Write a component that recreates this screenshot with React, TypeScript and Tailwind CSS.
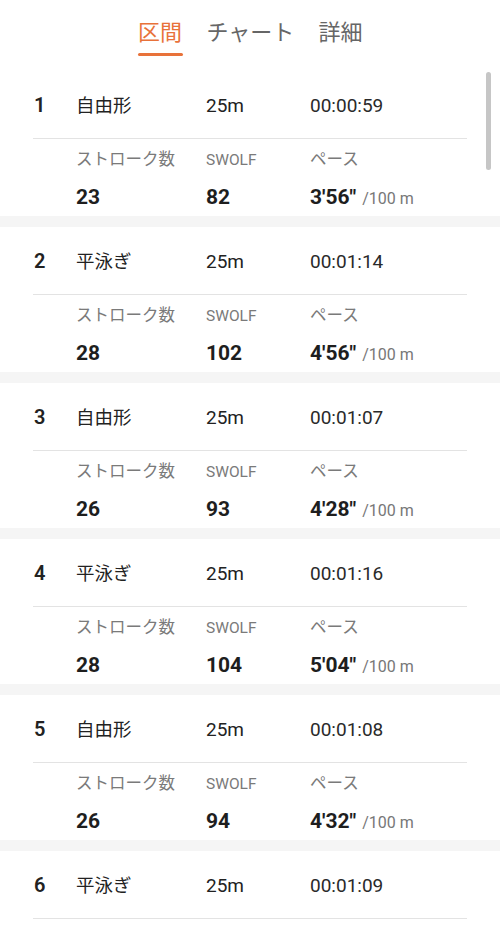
const LAPS = [
  { no: 1, stroke: "自由形", dist: "25m", time: "00:00:59", count: 23, swolf: 82, pace: "3'56\"" },
  { no: 2, stroke: "平泳ぎ", dist: "25m", time: "00:01:14", count: 28, swolf: 102, pace: "4'56\"" },
  { no: 3, stroke: "自由形", dist: "25m", time: "00:01:07", count: 26, swolf: 93, pace: "4'28\"" },
  { no: 4, stroke: "平泳ぎ", dist: "25m", time: "00:01:16", count: 28, swolf: 104, pace: "5'04\"" },
  { no: 5, stroke: "自由形", dist: "25m", time: "00:01:08", count: 26, swolf: 94, pace: "4'32\"" },
  { no: 6, stroke: "平泳ぎ", dist: "25m", time: "00:01:09", count: 27, swolf: 96, pace: "4'36\"" },
];

const TABS = ["区間", "チャート", "詳細"];

function LapCard({ lap }: { lap: (typeof LAPS)[number] }) {
  return (
    <div className="h-[145px] bg-white shrink-0">
      <div className="mx-[33px]">
        {/* Main row */}
        <div className="h-[67px] flex items-baseline pt-[21px] text-[#222] leading-[26px]">
          <span className="w-[43px] pl-px text-[20px] font-semibold">{lap.no}</span>
          <span className="w-[130px] text-[18.5px]">{lap.stroke}</span>
          <span className="w-[104px] text-[19px]">{lap.dist}</span>
          <span className="text-[19px] text-[#2a2a2a]">{lap.time}</span>
        </div>
        <div className="h-px bg-[#e3e3e3]" />

        {/* Stats */}
        <div className="pl-[43px] pt-[10px]">
          <div className="flex text-[16.5px] leading-[22px] text-[#7a7a7a]">
            <span className="w-[130px]">ストローク数</span>
            <span className="w-[104px] text-[15.5px]">SWOLF</span>
            <span>ペース</span>
          </div>
          <div className="flex items-baseline mt-[13px] text-[21px] leading-[26px] font-bold text-[#1e1e1e]">
            <span className="w-[130px]">{lap.count}</span>
            <span className="w-[104px]">{lap.swolf}</span>
            <span>
              {lap.pace}
              <span className="ml-[6px] text-[16px] font-normal text-[#777]">/100 m</span>
            </span>
          </div>
        </div>
      </div>
    </div>
  );
}

export default function App() {
  return (
    <div
      className="relative w-[500px] h-[930px] overflow-hidden bg-[#f5f5f5]"
      style={{ fontFamily: "Roboto, 'Noto Sans CJK JP', sans-serif" }}
    >
      {/* Tabs */}
      <div className="h-[71px] bg-white flex justify-center gap-[24px] pt-[19px]">
        {TABS.map((tab, i) => (
          <div key={tab} className="flex flex-col items-center">
            <span
              className={
                i === 0
                  ? "text-[22px] leading-[28px] text-[#e8723a]"
                  : "text-[22px] leading-[28px] text-[#666]"
              }
            >
              {tab}
            </span>
            {i === 0 && <div className="mt-[6px] h-[3px] w-[45px] rounded-full bg-[#e8723a]" />}
          </div>
        ))}
      </div>

      {/* Laps */}
      <div className="flex flex-col gap-[11px]">
        {LAPS.map((lap) => (
          <LapCard key={lap.no} lap={lap} />
        ))}
      </div>

      {/* Scrollbar */}
      <div className="absolute left-[486px] top-[72px] w-[5px] h-[98px] rounded-full bg-[#c6c6c6]" />
    </div>
  );
}
